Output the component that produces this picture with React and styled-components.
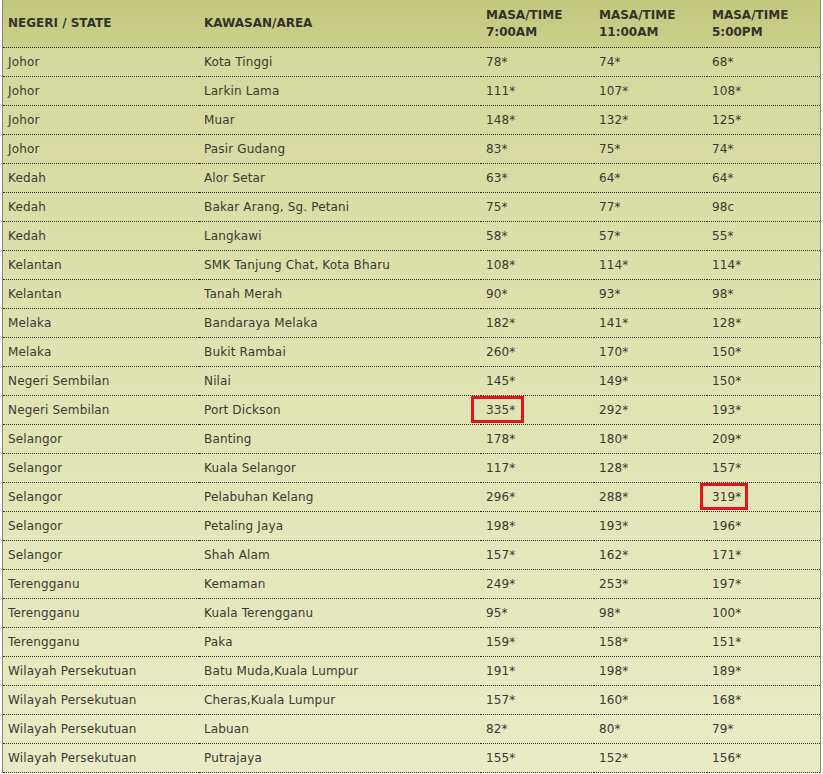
import React from "react";
import styled, { createGlobalStyle } from "styled-components";

const GlobalStyle = createGlobalStyle`
  html, body {
    margin: 0;
    padding: 0;
    background: #ffffff;
  }
  body {
    font-family: "DejaVu Sans", Verdana, sans-serif;
  }
`;

const Page = styled.div`
  padding-left: 2px;
  width: 821px;
`;

const Table = styled.table`
  width: 819px;
  table-layout: fixed;
  border-collapse: separate;
  border-spacing: 0;
  border-left: 1px solid #8a8a7a;
  border-right: 1px solid #8a8a7a;
  background: linear-gradient(180deg, #d2d799 0%, #dfe2b1 45%, #e9ebc6 100%);
  font-size: 12px;
  color: #3a3a32;
`;

const HeadRow = styled.tr`
  background: linear-gradient(180deg, #c3c87f 0%, #cbd08b 100%);
`;

const HeadCell = styled.th`
  height: 47px;
  padding: 0 0 0 5px;
  text-align: left;
  vertical-align: middle;
  font-weight: bold;
  font-size: 12px;
  line-height: 17px;
  color: #33332a;
  border-bottom: 1px dotted #2e2e26;
`;

const Cell = styled.td`
  height: 28px;
  padding: 0 0 0 5px;
  text-align: left;
  vertical-align: middle;
  line-height: 14px;
  letter-spacing: 0.15px;
  white-space: nowrap;
  border-bottom: 1px dotted #2e2e26;
`;

const Marked = styled.span`
  position: relative;
  &::after {
    content: "";
    position: absolute;
    left: ${(p) => p.$left}px;
    right: ${(p) => p.$right}px;
    top: -7px;
    bottom: -6px;
    border: 3px solid #e3151b;
  }
`;

const rows = [
  ["Johor", "Kota Tinggi", "78*", "74*", "68*"],
  ["Johor", "Larkin Lama", "111*", "107*", "108*"],
  ["Johor", "Muar", "148*", "132*", "125*"],
  ["Johor", "Pasir Gudang", "83*", "75*", "74*"],
  ["Kedah", "Alor Setar", "63*", "64*", "64*"],
  ["Kedah", "Bakar Arang, Sg. Petani", "75*", "77*", "98c"],
  ["Kedah", "Langkawi", "58*", "57*", "55*"],
  ["Kelantan", "SMK Tanjung Chat, Kota Bharu", "108*", "114*", "114*"],
  ["Kelantan", "Tanah Merah", "90*", "93*", "98*"],
  ["Melaka", "Bandaraya Melaka", "182*", "141*", "128*"],
  ["Melaka", "Bukit Rambai", "260*", "170*", "150*"],
  ["Negeri Sembilan", "Nilai", "145*", "149*", "150*"],
  ["Negeri Sembilan", "Port Dickson", { v: "335*", l: -15, r: -8 }, "292*", "193*"],
  ["Selangor", "Banting", "178*", "180*", "209*"],
  ["Selangor", "Kuala Selangor", "117*", "128*", "157*"],
  ["Selangor", "Pelabuhan Kelang", "296*", "288*", { v: "319*", l: -12, r: -6 }],
  ["Selangor", "Petaling Jaya", "198*", "193*", "196*"],
  ["Selangor", "Shah Alam", "157*", "162*", "171*"],
  ["Terengganu", "Kemaman", "249*", "253*", "197*"],
  ["Terengganu", "Kuala Terengganu", "95*", "98*", "100*"],
  ["Terengganu", "Paka", "159*", "158*", "151*"],
  ["Wilayah Persekutuan", "Batu Muda,Kuala Lumpur", "191*", "198*", "189*"],
  ["Wilayah Persekutuan", "Cheras,Kuala Lumpur", "157*", "160*", "168*"],
  ["Wilayah Persekutuan", "Labuan", "82*", "80*", "79*"],
  ["Wilayah Persekutuan", "Putrajaya", "155*", "152*", "156*"],
];

function Value({ value }) {
  if (typeof value === "string") return value;
  return (
    <Marked $left={value.l} $right={value.r}>
      {value.v}
    </Marked>
  );
}

export default function App() {
  return (
    <Page>
      <GlobalStyle />
      <Table>
        <colgroup>
          <col style={{ width: 196 }} />
          <col style={{ width: 282 }} />
          <col style={{ width: 113 }} />
          <col style={{ width: 113 }} />
          <col style={{ width: 113 }} />
        </colgroup>
        <thead>
          <HeadRow>
            <HeadCell>NEGERI / STATE</HeadCell>
            <HeadCell>KAWASAN/AREA</HeadCell>
            <HeadCell>MASA/TIME<br />7:00AM</HeadCell>
            <HeadCell>MASA/TIME<br />11:00AM</HeadCell>
            <HeadCell>MASA/TIME<br />5:00PM</HeadCell>
          </HeadRow>
        </thead>
        <tbody>
          {rows.map((r, i) => (
            <tr key={i}>
              {r.map((c, j) => (
                <Cell key={j}>
                  <Value value={c} />
                </Cell>
              ))}
            </tr>
          ))}
        </tbody>
      </Table>
    </Page>
  );
}
